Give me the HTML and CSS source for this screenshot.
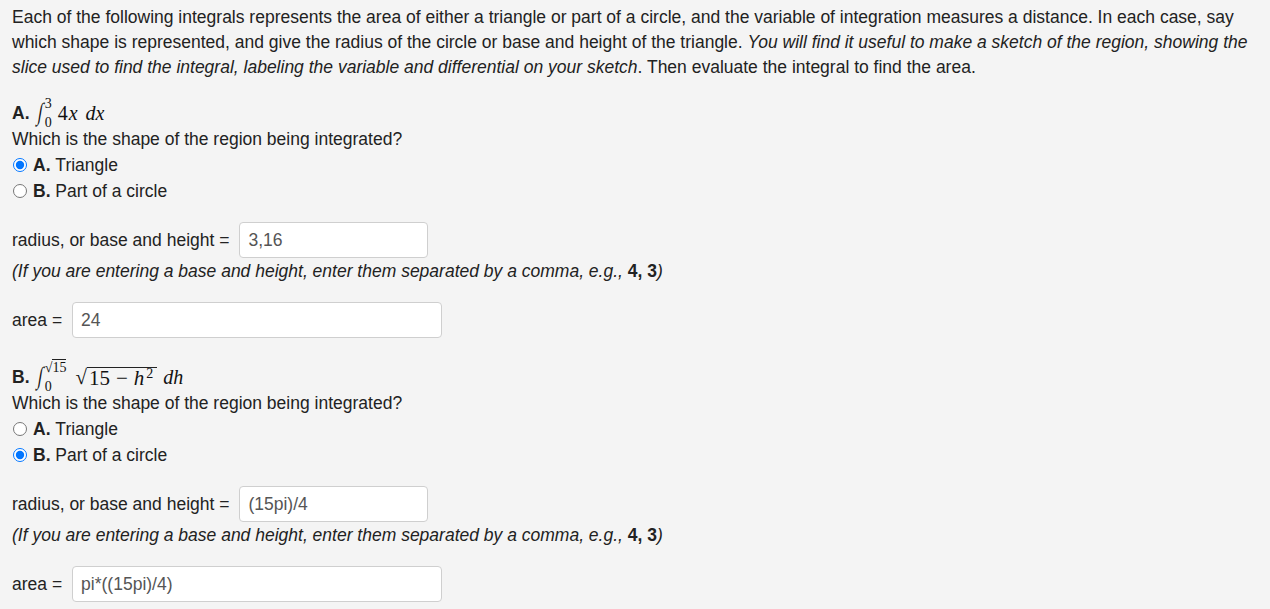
FILE: index.html
```html
<!DOCTYPE html>
<html>
<head>
<meta charset="utf-8">
<link rel="stylesheet" href="styles.css">
</head>
<body>
<div class="page">
  <p class="intro">Each of the following integrals represents the area of either a triangle or part of a circle, and the variable of integration measures a distance. In each case, say which shape is represented, and give the radius of the circle or base and height of the triangle. <i>You will find it useful to make a sketch of the region, showing the slice used to find the integral, labeling the variable and differential on your sketch</i>. Then evaluate the integral to find the area.</p>

  <div class="question">
    <div class="qline"><b>A.</b><span class="math"><span class="int">∫</span><span class="lims"><span class="up">3</span><span class="lo">0</span></span><span class="n">4</span><i class="v">x</i><i class="d">dx</i></span></div>
    <div class="line">Which is the shape of the region being integrated?</div>
    <label class="opt"><input type="radio" name="a" checked><b>A.</b>&nbsp;Triangle</label>
    <label class="opt"><input type="radio" name="a"><b>B.</b>&nbsp;Part of a circle</label>
    <div class="row first"><span>radius, or base and height =</span><input class="box short" type="text" value="3,16"></div>
    <div class="line hint"><i>(If you are entering a base and height, enter them separated by a comma, e.g., </i><b>4, 3</b><i>)</i></div>
    <div class="row second"><span>area =</span><input class="box long" type="text" value="24"></div>
  </div>

  <div class="question">
    <div class="qline"><b>B.</b><span class="math"><span class="int">∫</span><span class="lims"><span class="up"><span class="rad">√</span><span class="over">15</span></span><span class="lo">0</span></span><span class="sq"><span class="radbig">√</span><span class="overbig">15<span class="minus">−</span><i>h</i><sup>2</sup></span></span><i class="d dh">dh</i></span></div>
    <div class="line">Which is the shape of the region being integrated?</div>
    <label class="opt"><input type="radio" name="b"><b>A.</b>&nbsp;Triangle</label>
    <label class="opt"><input type="radio" name="b" checked><b>B.</b>&nbsp;Part of a circle</label>
    <div class="row first"><span>radius, or base and height =</span><input class="box short" type="text" value="(15pi)/4"></div>
    <div class="line hint"><i>(If you are entering a base and height, enter them separated by a comma, e.g., </i><b>4, 3</b><i>)</i></div>
    <div class="row second"><span>area =</span><input class="box long" type="text" value="pi*((15pi)/4)"></div>
  </div>
</div>
</body>
</html>
```

FILE: styles.css
```css
html, body {
  margin: 0;
  padding: 0;
  background: #f4f4f4;
}
body {
  font-family: "Liberation Sans", Arial, sans-serif;
  font-size: 17.5px;
  line-height: 25px;
  color: #222;
}
.page {
  padding: 5px 12px 0 12px;
}
.intro {
  margin: 0 0 20px 0;
}
.question {
  display: flex;
  flex-direction: column;
  margin-bottom: 26px;
}
.qline {
  height: 26px;
  line-height: 26px;
  display: flex;
  align-items: center;
}
.math {
  font-family: "Liberation Serif", "Times New Roman", serif;
  font-size: 20px;
  display: inline-flex;
  align-items: center;
  margin-left: 8px;
  color: #111;
}
.int {
  display: inline-block;
  font-size: 19px;
  line-height: 20px;
  font-weight: 300;
  transform: scaleX(0.85) scaleY(1.3) skewX(-14deg);
  position: relative;
  top: -1px;
}
.lims {
  display: inline-flex;
  flex-direction: column;
  font-size: 14px;
  line-height: 12px;
  margin-left: 2px;
  margin-right: 6px;
}
.lims .up { position: relative; top: -3px; }
.lims .lo { position: relative; top: 4px; }
.rad { font-size: 14px; }
.over { border-top: 1px solid #222; line-height: 12px; }
.n { margin-right: 1px; }
.math i { font-style: italic; }
.v { margin-right: 1px; }
.d { margin-left: 7px; }
.dh { margin-left: 6px; }
.sq { display: inline-flex; align-items: center; margin-left: 3px; }
.radbig { font-size: 21px; }
.overbig { border-top: 1px solid #222; font-size: 21px; line-height: 20px; padding-left: 2px; padding-right: 4px; }
.minus { margin: 0 6px; }
.overbig sup { font-size: 14px; line-height: 0; vertical-align: 7px; margin-left: 2px; }
.line {
  height: 26px;
  line-height: 26px;
}
.opt {
  display: flex;
  align-items: center;
  height: 26px;
}
.opt input {
  margin: 0 6px 0 1px;
  width: 14px;
  height: 14px;
}
.row {
  display: flex;
  align-items: center;
  height: 36px;
}
.row.first { margin-top: 18px; }
.row.second { margin-top: 18px; }
.row span { margin-right: 10px; }
.hint { margin-top: 0; }
.box {
  box-sizing: border-box;
  height: 36px;
  border: 1px solid #cfcfcf;
  border-radius: 4px;
  background: #fff;
  padding: 6px 8px;
  font-family: "Liberation Sans", Arial, sans-serif;
  font-size: 17.5px;
  color: #555;
  outline: none;
}
.box.short { width: 189px; }
.box.long { width: 370px; }
```
